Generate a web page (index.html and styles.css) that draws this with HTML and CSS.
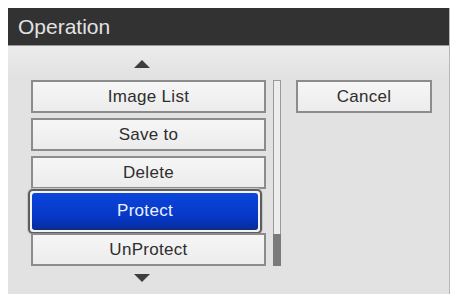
FILE: index.html
```html
<!DOCTYPE html>
<html>
<head>
<meta charset="utf-8">
<link rel="stylesheet" href="styles.css">
</head>
<body>
<div class="dialog">
  <div class="header">Operation</div>
  <div class="content">
    <div class="list-col">
      <div class="arrow-row top"><span class="arrow up"></span></div>
      <div class="list-area">
        <div class="list">
          <div class="item">Image List</div>
          <div class="item">Save to</div>
          <div class="item">Delete</div>
          <div class="item selected"><span class="sel-inner">Protect</span></div>
          <div class="item">UnProtect</div>
        </div>
        <div class="scrollbar"><div class="thumb"></div></div>
      </div>
      <div class="arrow-row bottom"><span class="arrow down"></span></div>
    </div>
    <div class="side">
      <div class="item cancel">Cancel</div>
    </div>
  </div>
</div>
</body>
</html>
```
FILE: styles.css
```css
html, body {
  margin: 0;
  padding: 0;
  background: #ffffff;
}
body {
  padding: 8px 0 0 8px;
  font-family: "Liberation Sans", Arial, sans-serif;
}
.dialog {
  width: 441px;
  height: 286px;
  border-right: 1px solid #b8b8b8;
  background: #e2e2e2;
  display: flex;
  flex-direction: column;
}
.header {
  height: 38px;
  background: #323232;
  color: #e2e2e2;
  font-size: 21px;
  line-height: 38px;
  padding-left: 10px;
  border-bottom: 1px solid #9a9a9a;
  box-sizing: border-box;
}
.content {
  flex: 1;
  display: flex;
  padding-left: 23px;
  background: linear-gradient(#ececec, #e2e2e2 30px);
}
.list-col {
  display: flex;
  flex-direction: column;
}
.arrow-row {
  display: flex;
  padding-left: 103px;
}
.arrow-row.top {
  height: 34px;
  align-items: center;
  padding-top: 1px;
  box-sizing: border-box;
}
.arrow-row.bottom {
  padding-top: 8px;
}
.arrow {
  width: 0;
  height: 0;
  border-left: 8px solid transparent;
  border-right: 8px solid transparent;
}
.arrow.up {
  border-bottom: 8px solid #3e3e3e;
}
.arrow.down {
  border-top: 8px solid #3e3e3e;
}
.list-area {
  display: flex;
  gap: 7px;
}
.list {
  width: 235px;
  display: flex;
  flex-direction: column;
  gap: 5px;
}
.item {
  height: 33px;
  box-sizing: border-box;
  border: 2px solid #8c8c8c;
  background: linear-gradient(#f6f6f6, #ececec);
  color: #2e2e2e;
  font-size: 17px;
  display: flex;
  align-items: center;
  justify-content: center;
  letter-spacing: 0.3px;
}
.item.selected {
  height: 45px;
  margin: -5px 4px -6px -3px;
  border: 2px solid #5e5e5e;
  border-radius: 5px;
  padding: 2px;
  background: #f4f4f4;
  box-shadow: 0 0 0 1px #c8c8c8;
}
.sel-inner {
  flex: 1;
  align-self: stretch;
  display: flex;
  align-items: center;
  justify-content: center;
  border-radius: 3px;
  background: linear-gradient(#0b45dc, #0637c4 70%, #052e9e);
  color: #eef2ff;
  border-bottom: 1px solid #1a2a66;
}
.scrollbar {
  width: 8px;
  box-sizing: border-box;
  border: 1px solid #9a9a9a;
  background: #ededed;
  display: flex;
  flex-direction: column;
  justify-content: flex-end;
}
.thumb {
  height: 32px;
  background: #7a7a7a;
  margin: 0 -1px -1px;
}
.side {
  padding-top: 34px;
  padding-left: 15px;
}
.item.cancel {
  width: 136px;
}
```
